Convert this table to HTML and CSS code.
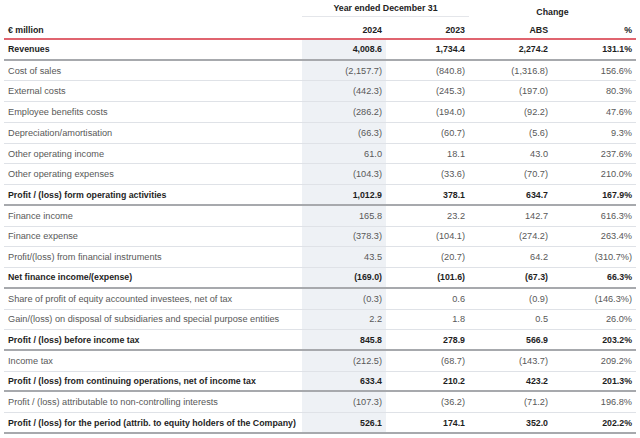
FILE: index.html
```html
<!DOCTYPE html>
<html lang="en">
<head>
<meta charset="utf-8">
<title>Income statement</title>
<link rel="stylesheet" href="styles.css">
</head>
<body>
<div class="tbl">
  <div class="hrow1">
    <div class="c-label"></div>
    <div class="c-year">Year ended December 31</div>
    <div class="c-change">Change</div>
  </div>
  <div class="hrow2">
    <div class="cell label">€ million</div>
    <div class="cell num">2024</div>
    <div class="cell num">2023</div>
    <div class="cell num">ABS</div>
    <div class="cell num">%</div>
  </div>
  <div class="row total"><div class="cell label">Revenues</div><div class="cell num hl">4,008.6</div><div class="cell num">1,734.4</div><div class="cell num">2,274.2</div><div class="cell num">131.1%</div></div>
  <div class="row"><div class="cell label">Cost of sales</div><div class="cell num hl">(2,157.7)</div><div class="cell num">(840.8)</div><div class="cell num">(1,316.8)</div><div class="cell num">156.6%</div></div>
  <div class="row"><div class="cell label">External costs</div><div class="cell num hl">(442.3)</div><div class="cell num">(245.3)</div><div class="cell num">(197.0)</div><div class="cell num">80.3%</div></div>
  <div class="row"><div class="cell label">Employee benefits costs</div><div class="cell num hl">(286.2)</div><div class="cell num">(194.0)</div><div class="cell num">(92.2)</div><div class="cell num">47.6%</div></div>
  <div class="row"><div class="cell label">Depreciation/amortisation</div><div class="cell num hl">(66.3)</div><div class="cell num">(60.7)</div><div class="cell num">(5.6)</div><div class="cell num">9.3%</div></div>
  <div class="row"><div class="cell label">Other operating income</div><div class="cell num hl">61.0</div><div class="cell num">18.1</div><div class="cell num">43.0</div><div class="cell num">237.6%</div></div>
  <div class="row"><div class="cell label">Other operating expenses</div><div class="cell num hl">(104.3)</div><div class="cell num">(33.6)</div><div class="cell num">(70.7)</div><div class="cell num">210.0%</div></div>
  <div class="row total"><div class="cell label">Profit / (loss) form operating activities</div><div class="cell num hl">1,012.9</div><div class="cell num">378.1</div><div class="cell num">634.7</div><div class="cell num">167.9%</div></div>
  <div class="row"><div class="cell label">Finance income</div><div class="cell num hl">165.8</div><div class="cell num">23.2</div><div class="cell num">142.7</div><div class="cell num">616.3%</div></div>
  <div class="row"><div class="cell label">Finance expense</div><div class="cell num hl">(378.3)</div><div class="cell num">(104.1)</div><div class="cell num">(274.2)</div><div class="cell num">263.4%</div></div>
  <div class="row"><div class="cell label">Profit/(loss) from financial instruments</div><div class="cell num hl">43.5</div><div class="cell num">(20.7)</div><div class="cell num">64.2</div><div class="cell num">(310.7%)</div></div>
  <div class="row total"><div class="cell label">Net finance income/(expense)</div><div class="cell num hl">(169.0)</div><div class="cell num">(101.6)</div><div class="cell num">(67.3)</div><div class="cell num">66.3%</div></div>
  <div class="row"><div class="cell label">Share of profit of equity accounted investees, net of tax</div><div class="cell num hl">(0.3)</div><div class="cell num">0.6</div><div class="cell num">(0.9)</div><div class="cell num">(146.3%)</div></div>
  <div class="row"><div class="cell label">Gain/(loss) on disposal of subsidiaries and special purpose entities</div><div class="cell num hl">2.2</div><div class="cell num">1.8</div><div class="cell num">0.5</div><div class="cell num">26.0%</div></div>
  <div class="row total"><div class="cell label">Profit / (loss) before income tax</div><div class="cell num hl">845.8</div><div class="cell num">278.9</div><div class="cell num">566.9</div><div class="cell num">203.2%</div></div>
  <div class="row"><div class="cell label">Income tax</div><div class="cell num hl">(212.5)</div><div class="cell num">(68.7)</div><div class="cell num">(143.7)</div><div class="cell num">209.2%</div></div>
  <div class="row total"><div class="cell label">Profit / (loss) from continuing operations, net of income tax</div><div class="cell num hl">633.4</div><div class="cell num">210.2</div><div class="cell num">423.2</div><div class="cell num">201.3%</div></div>
  <div class="row"><div class="cell label">Profit / (loss) attributable to non-controlling interests</div><div class="cell num hl">(107.3)</div><div class="cell num">(36.2)</div><div class="cell num">(71.2)</div><div class="cell num">196.8%</div></div>
  <div class="row total"><div class="cell label">Profit / (loss) for the period (attrib. to equity holders of the Company)</div><div class="cell num hl">526.1</div><div class="cell num">174.1</div><div class="cell num">352.0</div><div class="cell num">202.2%</div></div>
</div>
</body>
</html>
```
FILE: styles.css
```css
* { box-sizing: border-box; }
html, body { margin: 0; padding: 0; background: #ffffff; }
body {
  font-family: "Liberation Sans", Arial, sans-serif;
  font-size: 9.2px;
  color: #585858;
  padding: 0 4px;
}
.tbl { width: 632px; }
.hrow1, .hrow2, .row {
  display: grid;
  grid-template-columns: 298px 84px 83px 83px 84px;
}
.hrow1 { height: 17px; }
.c-year {
  grid-column: 2 / 4;
  display: flex;
  align-items: center;
  justify-content: center;
  font-weight: bold;
  font-size: 8.8px;
  color: #222;
  border-bottom: 1px solid #e4e6ea;
  padding-bottom: 1px;
}
.c-change {
  grid-column: 4 / 6;
  display: flex;
  align-items: flex-end;
  justify-content: center;
  font-weight: bold;
  font-size: 8.8px;
  color: #222;
  margin-bottom: 0;
}
.hrow2 {
  height: 23px;
  border-bottom: 2px solid #e0646f;
  font-weight: bold;
  font-size: 8.8px;
  color: #222;
}
.hrow2 .cell { padding-top: 5px; }
.row {
  height: 20.74px;
  border-bottom: 1px solid #dfe2e7;
}
.row.total {
  border-bottom: 2px solid #a7a9ad;
  font-weight: bold;
  font-size: 8.8px;
  color: #1e1e1e;
}
.cell {
  display: flex;
  align-items: center;
  white-space: nowrap;
}
.label { padding-left: 4px; }
.num { justify-content: flex-end; padding-right: 4px; }
.hl { background: #eef1f5; }
```
